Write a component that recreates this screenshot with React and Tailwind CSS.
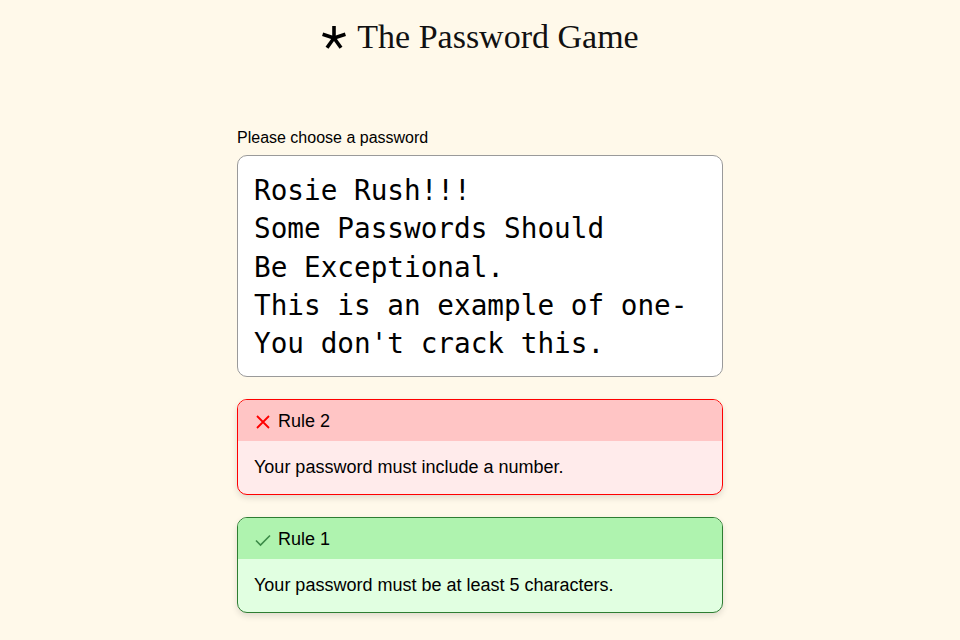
import React from "react";

const Rule = ({ n, text, ok }) => {
  return (
    <div
      className={`rounded-[10px] border overflow-hidden shadow-[0_3px_6px_rgba(0,0,0,0.12)] ${ok ? "border-[#2e7d32] bg-[#e1ffe1]" : "border-[#ff0000] bg-[#ffebeb]"}`}
    >
      <div className={`h-[41px] flex items-center px-4 pt-[2px] gap-1.5 text-[18px] text-black ${ok ? "bg-[#aff3af]" : "bg-[#ffc5c5]"}`}>
        {ok ? (
          <svg width="18" height="18" viewBox="0 0 18 18" fill="none" stroke="#3c8a48" strokeWidth="1.6">
            <path d="M2 9.5 L6.5 14 L16 4.5" />
          </svg>
        ) : (
          <svg width="18" height="18" viewBox="0 0 18 18" fill="none" stroke="#ff0000" strokeWidth="1.8">
            <path d="M3 3 L15 15 M15 3 L3 15" />
          </svg>
        )}
        <span>Rule {n}</span>
      </div>
      <div className="h-[53px] flex items-center px-4 text-[18px] text-black">{text}</div>
    </div>
  );
};

const Star = () => (
  <svg width="26" height="26" viewBox="-13 -13 26 26" className="mt-[3px]">
    <g stroke="#000" strokeWidth="3.6" strokeLinecap="butt">
      <path d="M0 0 L0 -12" />
      <path d="M0 0 L11.4 -3.7" />
      <path d="M0 0 L-11.4 -3.7" />
      <path d="M0 0 L7 9.7" />
      <path d="M0 0 L-7 9.7" />
    </g>
  </svg>
);

export default function App() {
  return (
    <div className="w-full min-h-[640px] bg-[#fff9ea] font-['Liberation_Sans',Arial,sans-serif]">
      <div className="flex justify-center items-center pt-[16px] h-[56px] gap-[10px]">
        <Star />
        <h1 className="text-[34px] text-[#111] font-['Liberation_Serif',serif]">The Password Game</h1>
      </div>
      <div className="w-[486px] mx-auto mt-[72px]">
        <div className="text-[16px] text-black mb-[8px] leading-[19px]">Please choose a password</div>
        <div className="bg-white border border-[#9a9a9a] rounded-[10px] h-[222px] px-4 pt-[16px] font-['DejaVu_Sans_Mono',monospace] text-[27.7px] leading-[38.3px] text-black">
          <div>Rosie Rush!!!</div>
          <div>Some Passwords Should</div>
          <div>Be Exceptional.</div>
          <div>This is an example of one-</div>
          <div>You don't crack this.</div>
        </div>
        <div className="mt-[22px] flex flex-col gap-[22px]">
          <Rule n={2} text="Your password must include a number." ok={false} />
          <Rule n={1} text="Your password must be at least 5 characters." ok={true} />
        </div>
      </div>
    </div>
  );
}
